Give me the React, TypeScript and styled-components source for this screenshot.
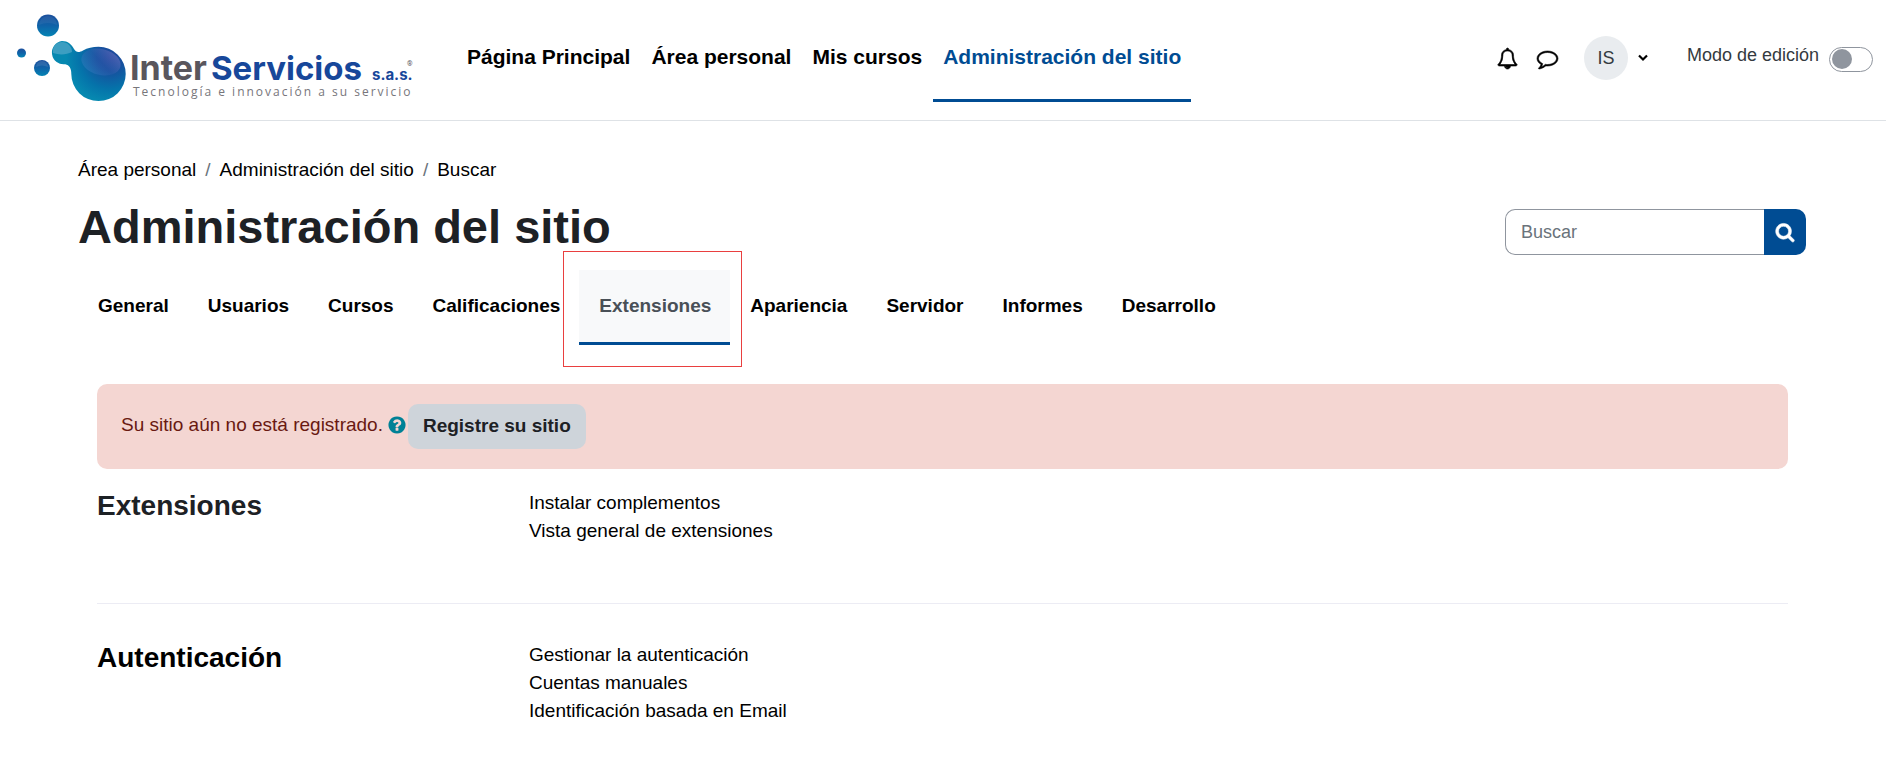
import React from 'react';
import styled, { createGlobalStyle } from 'styled-components';

const GlobalStyle = createGlobalStyle`
  *, *::before, *::after { box-sizing: border-box; }
  body {
    margin: 0;
    background: #fff;
    color: #1d2125;
    font-family: "Liberation Sans", Arial, sans-serif;
    font-size: 19px;
    line-height: 28px;
  }
  a { color: inherit; text-decoration: none; }
  ul, ol { list-style: none; margin: 0; padding: 0; }
  h1, h2 { margin: 0; font-weight: 700; }
  button, input { font: inherit; margin: 0; }
`;

const Header = styled.header`
  display: flex;
  align-items: center;
  min-height: 121px;
  padding-right: 13px;
  border-bottom: 1px solid #dee2e6;
`;

const LogoLink = styled.a`
  display: block;
  width: 430px;
  height: 120px;
  flex: none;
  margin-right: 27px;
`;

const MainNav = styled.nav`
  display: flex;
  flex: 1;
  gap: 1px;
`;

const NavLink = styled.a<{ $active?: boolean }>`
  padding: 25px 10px 28px;
  border-bottom: 3px solid ${p => (p.$active ? '#004c93' : 'transparent')};
  color: ${p => (p.$active ? '#004c93' : '#000')};
  font-size: 21px;
  font-weight: 700;
  white-space: nowrap;
`;

const UserBar = styled.div`
  display: flex;
  align-items: center;
  padding-bottom: 4px;
`;

const IconButton = styled.button`
  display: flex;
  padding: 0;
  border: 0;
  margin-right: 19px;
  background: none;
  color: #000;
`;

const UserMenu = styled.button`
  display: flex;
  align-items: center;
  gap: 10px;
  padding: 0;
  border: 0;
  margin: 0 39px 0 7px;
  background: none;
  color: #000;
`;

const Avatar = styled.span`
  display: flex;
  align-items: center;
  justify-content: center;
  width: 44px;
  height: 44px;
  border-radius: 50%;
  background: #e9ecef;
  color: #343a40;
  font-size: 18px;
`;

const EditMode = styled.label`
  display: flex;
  align-items: center;
  gap: 10px;
  color: #343a40;
  font-size: 18px;
  line-height: 24px;
  white-space: nowrap;
`;

const EditLabel = styled.span`
  padding-bottom: 6px;
`;

const Switch = styled.input`
  appearance: none;
  display: flex;
  align-items: center;
  width: 44px;
  height: 25px;
  padding: 0 2px;
  border: 1px solid #8f959e;
  border-radius: 13px;
  margin-top: 2px;
  background: #fff;

  &::before {
    content: '';
    width: 20px;
    height: 20px;
    border-radius: 50%;
    background: #8f959e;
  }
  &:checked { justify-content: flex-end; }
`;

const Page = styled.main`
  padding: 35px 79px 40px 78px;
`;

const Breadcrumb = styled.ol`
  display: flex;
  color: #000;

  li + li::before {
    content: '/';
    padding: 0 9px;
    color: #6a737b;
  }
`;

const TitleRow = styled.div`
  display: flex;
  align-items: flex-end;
  justify-content: space-between;
  padding-right: 1px;
  margin: 15px 0;
`;

const Title = styled.h1`
  font-size: 47px;
  line-height: 56px;
`;

const Search = styled.form`
  display: flex;
  width: 301px;
  height: 46px;
`;

const SearchInput = styled.input`
  flex: 1;
  min-width: 0;
  padding: 0 15px;
  border: 1px solid #8f959e;
  border-right: 0;
  border-radius: 10px 0 0 10px;
  background: #fff;
  font-size: 18px;
  &::placeholder { color: #6a737b; opacity: 1; }
`;

const SearchButton = styled.button`
  display: flex;
  align-items: center;
  justify-content: center;
  width: 42px;
  padding: 0;
  border: 0;
  border-radius: 0 10px 10px 0;
  background: #004c93;
  color: #fff;
`;

const Tabs = styled.ul`
  display: flex;
`;

const TabItem = styled.li`
  position: relative;
`;

const Tab = styled.a<{ $active?: boolean }>`
  display: block;
  padding: 22px 19px 22px 20px;
  border-bottom: 3px solid ${p => (p.$active ? '#004c93' : 'transparent')};
  background: ${p => (p.$active ? '#f8f9fa' : 'transparent')};
  color: ${p => (p.$active ? '#495057' : '#000')};
  font-weight: 700;
`;

const Marker = styled.span`
  position: absolute;
  inset: -19px -12px -22px -16px;
  border: 1px solid #e93f3f;
  pointer-events: none;
`;

const Content = styled.div`
  padding: 39px 19px 0;
`;

const Alert = styled.div`
  display: flex;
  align-items: flex-start;
  padding: 20px 24px;
  border-radius: 10px;
  margin-bottom: 20px;
  background: #f4d6d2;
  color: #691911;
`;

const AlertText = styled.span`
  padding-top: 7px;
`;

const HelpButton = styled.button`
  display: flex;
  padding: 0;
  border: 0;
  margin: 11px 1px 0 4px;
  background: none;
  color: #008196;
`;

const RegisterButton = styled.button`
  height: 45px;
  padding: 0 15px 2px;
  border: 0;
  border-radius: 10px;
  background: #ced4da;
  color: #1d2125;
  font-weight: 700;
`;

const Section = styled.section`
  display: grid;
  grid-template-columns: 432px 1fr;

  & + & {
    padding-top: 37px;
    border-top: 1px solid #ececf4;
    margin-top: 58px;
  }
`;

const SectionTitle = styled.h2<{ $linked?: boolean }>`
  font-size: 28px;
  line-height: 34px;
  color: ${p => (p.$linked ? '#000' : '#1d2125')};
`;

const LinkList = styled.ul`
  color: #000;
`;

const glyphs = {
  bell: 'M912 1696q0-16-16-16-59 0-101.5-42.5t-42.5-101.5q0-16-16-16t-16 16q0 73 51.5 124.5t124.5 51.5q16 0 16-16zm-666-288h1300q-266-300-266-832 0-51-24-105t-69-103-121.5-80.5-169.5-31.5-169.5 31.5-121.5 80.5-69 103-24 105q0 532-266 832zm1482 0q0 52-38 90t-90 38h-448q0 106-75 181t-181 75-181-75-75-181h-448q-52 0-90-38t-38-90q50-42 91-88t85-119.5 74.5-158.5 50-206 19.5-260q0-152 117-282.5t307-158.5q-8-19-8-39 0-40 28-68t68-28 68 28 28 68q0 20-8 39 190 28 307 158.5t117 282.5q0 139 19.5 260t50 206 74.5 158.5 85 119.5 91 88z',
  comment: 'M896 384q-204 0-381.5 69.5t-282 187.5-104.5 255q0 112 71.5 213.5t201.5 175.5l87 50-27 96q-24 91-70 172 152-63 275-171l43-38 57 6q69 8 130 8 204 0 381.5-69.5t282-187.5 104.5-255-104.5-255-282-187.5-381.5-69.5zm896 512q0 174-120 321.5t-326 233-450 85.5q-70 0-145-8-198 175-460 242-49 14-114 22h-5q-15 0-27-10.5t-16-27.5v-1q-3-4-.5-12t2-10 4.5-9.5l6-9 7-8.5 8-9q7-8 31-34.5t34.5-38 31-39.5 32.5-51 27-59 26-76q-157-89-247.5-220t-90.5-281q0-174 120-321.5t326-233 450-85.5 450 85.5 326 233 120 321.5z',
  search: 'M1216 832q0-185-131.5-316.5t-316.5-131.5-316.5 131.5-131.5 316.5 131.5 316.5 316.5 131.5 316.5-131.5 131.5-316.5zm512 832q0 52-38 90t-90 38q-54 0-90-38l-343-342q-179 124-399 124-143 0-273.5-55.5t-225-150-150-225-55.5-273.5 55.5-273.5 150-225 225-150 273.5-55.5 273.5 55.5 225 150 150 225 55.5 273.5q0 220-124 399l343 343q37 37 37 90z',
  help: 'M1024 1376v-192q0-14-9-23t-23-9h-192q-14 0-23 9t-9 23v192q0 14 9 23t23 9h192q14 0 23-9t9-23zm256-672q0-88-55.5-163t-138.5-116-170-41q-243 0-371 213-15 24 8 42l132 100q7 6 19 6 16 0 25-12 53-68 86-92 34-24 86-24 48 0 85.5 26t37.5 59q0 38-20 61t-68 45q-63 28-115.5 86.5t-52.5 125.5v36q0 14 9 23t23 9h192q14 0 23-9t9-23q0-19 21.5-49.5t54.5-49.5q32-18 49-28.5t46-35 44.5-48 28-60.5 12.5-81zm384 192q0 209-103 385.5t-279.5 279.5-385.5 103-385.5-103-279.5-279.5-103-385.5 103-385.5 279.5-279.5 385.5-103 385.5 103 279.5 279.5 103 385.5z',
};

const Glyph = ({ name, size, weight = 0 }: { name: keyof typeof glyphs; size: number; weight?: number }) => (
  <svg
    width={size}
    height={size}
    viewBox="0 0 1792 1792"
    fill="currentColor"
    stroke="currentColor"
    strokeWidth={weight}
    overflow="visible"
    aria-hidden="true"
  >
    <path d={glyphs[name]} />
  </svg>
);

const Logo = () => (
  <svg width="430" height="120" viewBox="0 0 430 120" role="img" aria-label="InterServicios S.a.s.">
    <defs>
      <linearGradient id="drop" x1="0" y1="0" x2="0" y2="1">
        <stop offset="0" stopColor="#1c4f9c" />
        <stop offset="0.5" stopColor="#0f62a8" />
        <stop offset="1" stopColor="#0484b4" />
      </linearGradient>
      <radialGradient id="blob" gradientUnits="userSpaceOnUse" cx="110" cy="58" r="44">
        <stop offset="0" stopColor="#21479c" />
        <stop offset="0.3" stopColor="#16509e" />
        <stop offset="0.7" stopColor="#0573aa" />
        <stop offset="1" stopColor="#0688b0" />
      </radialGradient>
      <linearGradient id="gloss" x1="0" y1="1" x2="1" y2="0">
        <stop offset="0.1" stopColor="#3f86c8" stopOpacity="0.4" />
        <stop offset="0.5" stopColor="#3a62b4" stopOpacity="0.3" />
        <stop offset="1" stopColor="#8a7cc8" stopOpacity="0.6" />
      </linearGradient>
    </defs>
    <circle cx="48" cy="25.5" r="11" fill="url(#drop)" />
    <path d="M39 25a9 9 0 0 1 18 0q-9-4-18 0z" fill="#fff" opacity="0.06" />
    <circle cx="21.5" cy="53" r="4.5" fill="url(#drop)" />
    <circle cx="42" cy="68" r="8" fill="url(#drop)" />
    <path d="M36 67a6 6 0 0 1 12 0q-6-3-12 0z" fill="#fff" opacity="0.1" />
    <path
      d="M62 41c6 0 9.5 3.5 12 8 2 3.5 5 3.8 9 1.5 4.5-2.7 9.5-3.8 15.5-3.8a27.2 27.2 0 1 1-27.2 27.2c0-5.5-2-8.9-6-9.7a11.6 11.6 0 1 1-3.3-23.2z"
      fill="url(#blob)"
    />
    <path d="M53 53c-1-7 4-11 9-11s10 4 10 10c-6 3-13 3-19 1z" fill="#8fc0dc" opacity="0.4" />
    <ellipse cx="101" cy="62" rx="20" ry="13" transform="rotate(14 101 62)" fill="url(#gloss)" />
    <text x="130" y="80" fontFamily="Inter, sans-serif" fontSize="34" fontWeight="700" fill="#59565d">Inter</text>
    <text x="211" y="80" fontFamily="Inter, sans-serif" fontSize="33" fontWeight="700" fill="#17479a">Servicios</text>
    <text x="372" y="80" fontFamily="Inter, sans-serif" fontSize="15" fontWeight="700" fill="#17479a">s.a.s.</text>
    <text x="407" y="66" fontFamily="Roboto, sans-serif" fontSize="7" fill="#59565d">®</text>
    <text x="133" y="96" fontFamily="'Open Sans', sans-serif" fontSize="12" letterSpacing="2" fill="#77767b">
      Tecnología e innovación a su servicio
    </text>
  </svg>
);

const mainLinks = ['Página Principal', 'Área personal', 'Mis cursos', 'Administración del sitio'];
const tabs = ['General', 'Usuarios', 'Cursos', 'Calificaciones', 'Extensiones', 'Apariencia', 'Servidor', 'Informes', 'Desarrollo'];
const sections = [
  { title: 'Extensiones', linked: false, links: ['Instalar complementos', 'Vista general de extensiones'] },
  { title: 'Autenticación', linked: true, links: ['Gestionar la autenticación', 'Cuentas manuales', 'Identificación basada en Email'] },
];

export default function App() {
  return (
    <>
      <GlobalStyle />
      <Header>
        <LogoLink href="#"><Logo /></LogoLink>
        <MainNav>
          {mainLinks.map((label, i) => (
            <NavLink key={label} href="#" $active={i === 3}>{label}</NavLink>
          ))}
        </MainNav>
        <UserBar>
          <IconButton aria-label="Notificaciones"><Glyph name="bell" size={21} weight={50} /></IconButton>
          <IconButton aria-label="Mensajes"><Glyph name="comment" size={21} weight={50} /></IconButton>
          <UserMenu aria-label="Menú de usuario">
            <Avatar>IS</Avatar>
            <svg width="10" height="8" viewBox="0 0 10 8" aria-hidden="true">
              <path d="M1 1.5l4 4 4-4" fill="none" stroke="currentColor" strokeWidth="2.2" />
            </svg>
          </UserMenu>
          <EditMode>
            <EditLabel>Modo de edición</EditLabel>
            <Switch type="checkbox" />
          </EditMode>
        </UserBar>
      </Header>
      <Page>
        <Breadcrumb>
          <li><a href="#">Área personal</a></li>
          <li><a href="#">Administración del sitio</a></li>
          <li><a href="#">Buscar</a></li>
        </Breadcrumb>
        <TitleRow>
          <Title>Administración del sitio</Title>
          <Search onSubmit={e => e.preventDefault()}>
            <SearchInput type="text" placeholder="Buscar" aria-label="Buscar" />
            <SearchButton aria-label="Buscar"><Glyph name="search" size={20} weight={50} /></SearchButton>
          </Search>
        </TitleRow>
        <Tabs>
          {tabs.map(label => {
            const active = label === 'Extensiones';
            return (
              <TabItem key={label}>
                <Tab href="#" $active={active}>{label}</Tab>
                {active && <Marker />}
              </TabItem>
            );
          })}
        </Tabs>
        <Content>
          <Alert>
            <AlertText>Su sitio aún no está registrado.</AlertText>
            <HelpButton aria-label="Ayuda"><Glyph name="help" size={20} /></HelpButton>
            <RegisterButton>Registre su sitio</RegisterButton>
          </Alert>
          {sections.map(section => (
            <Section key={section.title}>
              <SectionTitle $linked={section.linked}>
                {section.linked ? <a href="#">{section.title}</a> : section.title}
              </SectionTitle>
              <LinkList>
                {section.links.map(link => (
                  <li key={link}><a href="#">{link}</a></li>
                ))}
              </LinkList>
            </Section>
          ))}
        </Content>
      </Page>
    </>
  );
}
